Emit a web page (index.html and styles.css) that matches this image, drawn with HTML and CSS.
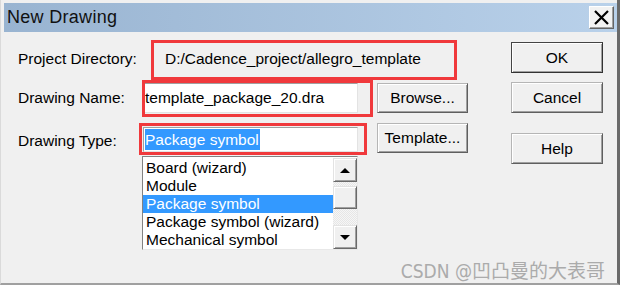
FILE: index.html
```html
<!DOCTYPE html>
<html>
<head>
  <meta charset="UTF-8">
  <title>New Drawing</title>
  <link rel="stylesheet" href="styles.css">
</head>
<body>
<div class="window">
  <div class="titlebar">
    <span class="title">New Drawing</span>
    <button class="close">
      <svg width="17" height="15" viewBox="0 0 17 15"><path d="M2 1 L15 14 M15 1 L2 14" stroke="#000" stroke-width="2.2" fill="none"/></svg>
    </button>
  </div>
  <div class="body">
    <div class="form">
      <div class="row row-dir">
        <label>Project Directory:</label>
        <span class="dir">D:/Cadence_project/allegro_template</span>
      </div>
      <div class="row row-name">
        <label>Drawing Name:</label>
        <div class="field">template_package_20.dra</div>
        <button class="btn">Browse...</button>
      </div>
      <div class="row row-type">
        <label>Drawing Type:</label>
        <div class="field"><span class="sel">Package symbol</span></div>
        <button class="btn">Template...</button>
      </div>
      <div class="list">
        <div class="items">
          <div class="item">Board (wizard)</div>
          <div class="item">Module</div>
          <div class="item active">Package symbol</div>
          <div class="item">Package symbol (wizard)</div>
          <div class="item">Mechanical symbol</div>
        </div>
        <div class="scrollbar">
          <div class="sb-btn"><span class="arrow up"></span></div>
          <div class="track short"></div>
          <div class="sb-btn thumb"></div>
          <div class="track"></div>
          <div class="sb-btn"><span class="arrow down"></span></div>
        </div>
      </div>
    </div>
    <div class="actions">
      <button class="btn default">OK</button>
      <button class="btn">Cancel</button>
      <button class="btn help">Help</button>
    </div>
  </div>

  <!-- annotation boxes drawn over the dialog -->
  <div class="mark mark-dir"></div>
  <div class="mark mark-name"></div>
  <div class="mark mark-type"></div>
  <div class="watermark">CSDN @凹凸曼的大表哥</div>
</div>
</body>
</html>
```

FILE: styles.css
```css
body {
  margin: 0;
  background: #fff;
  font-family: "Liberation Sans", Arial, sans-serif;
  font-size: 15.5px;
  color: #000;
}

.window {
  position: relative;
  box-sizing: border-box;
  width: 620px;
  height: 285px;
  padding: 3px 0 0 3px;
  background: #f0f0f0;
  border-left: 1px solid #dadada;
  border-right: 3px solid #6a6a6a;
  border-bottom: 2px solid #a0a0a0;
  display: flex;
  flex-direction: column;
}

.titlebar {
  height: 29px;
  background: linear-gradient(to right, #99b4d1, #b9d1ea);
  display: flex;
  align-items: center;
  justify-content: space-between;
  padding: 0 3px 0 3px;
}

.title {
  font-size: 18px;
  letter-spacing: 0.3px;
  color: #111;
}

.close {
  width: 25px;
  height: 23px;
  padding: 0;
  background: #f2f2f2;
  border: 1px solid;
  border-color: #fff #646464 #646464 #fff;
  box-shadow: inset -1px -1px #a0a0a0;
  display: flex;
  align-items: center;
  justify-content: center;
}

.body {
  flex: 1;
  display: flex;
  padding-left: 14px;
}

.row {
  display: flex;
  align-items: flex-start;
}

.row label {
  width: 125px;
  flex: none;
}

.row-dir {
  margin-top: 8px;
  height: 38px;
  align-items: center;
}

.dir {
  padding-left: 22px;
}

.row-name {
  margin-top: 5px;
  height: 30px;
}

.row-name label {
  line-height: 30px;
}

.row-type {
  margin-top: 10px;
  height: 30px;
}

.row-type label {
  line-height: 30px;
  padding-top: 3px;
}

.field {
  box-sizing: border-box;
  width: 215px;
  height: 30px;
  background: #fff;
  border: 1px solid;
  border-color: #a0a0a0 #e3e3e3 #e3e3e3 #a0a0a0;
  padding: 0 1px;
  line-height: 28px;
  white-space: nowrap;
  overflow: hidden;
}

.row-type .field {
  height: 25px;
  margin-top: 4px;
  line-height: 23px;
}

.sel {
  background: #3399ff;
  color: #fff;
  padding: 2px 1px 2px 0;
}

.btn {
  box-sizing: border-box;
  width: 91px;
  height: 31px;
  margin-left: 19px;
  padding: 0;
  font-family: "Liberation Sans", Arial, sans-serif;
  font-size: 15.5px;
  color: #000;
  background: #f0f0f0;
  border: 1px solid;
  border-color: #b5b5b5 #5f5f5f #5f5f5f #b5b5b5;
  box-shadow: inset 1px 1px #fff, inset -1px -1px #a0a0a0;
}

.row .btn {
  height: 30px;
}

.list {
  box-sizing: border-box;
  margin: 3px 0 0 124px;
  width: 216px;
  height: 94px;
  background: #fff;
  border: 1px solid;
  border-color: #828282 #e8e8e8 #e8e8e8 #828282;
  display: flex;
}

.items {
  flex: 1;
  padding-top: 2px;
}

.item {
  height: 18px;
  line-height: 18px;
  padding-left: 3px;
  white-space: nowrap;
}

.item.active {
  background: #3399ff;
  color: #fff;
}

.scrollbar {
  width: 24px;
  padding-top: 1px;
  display: flex;
  flex-direction: column;
}

.sb-btn {
  box-sizing: border-box;
  height: 24px;
  background: #f0f0f0;
  border: 1px solid;
  border-color: #e3e3e3 #6a6a6a #6a6a6a #e3e3e3;
  box-shadow: inset 1px 1px #fff, inset -1px -1px #a0a0a0;
  display: flex;
  align-items: center;
  justify-content: center;
}

.thumb {
  height: 23px;
}

.track {
  height: 16px;
  background: repeating-conic-gradient(#f6f6f6 0 25%, #e6e6e6 0 50%) 0 0 / 2px 2px;
}

.track.short {
  height: 4px;
}

.arrow {
  width: 0;
  height: 0;
  border-left: 5px solid transparent;
  border-right: 5px solid transparent;
}

.arrow.up {
  border-bottom: 5px solid #000;
}

.arrow.down {
  border-top: 5px solid #000;
}

.actions {
  margin-left: auto;
  margin-right: 14px;
  display: flex;
  flex-direction: column;
}

.actions .btn {
  margin-left: 0;
  width: 92px;
  margin-top: 9px;
}

.actions .default {
  margin-top: 10px;
  border-color: #444 #333 #333 #444;
}

.actions .help {
  margin-top: 20px;
}

.mark {
  position: absolute;
  border: 3px solid #f0393c;
  box-sizing: border-box;
}

.mark-dir {
  left: 150px;
  top: 40px;
  width: 306px;
  height: 40px;
}

.mark-name {
  left: 141px;
  top: 80px;
  width: 231px;
  height: 37px;
}

.mark-type {
  left: 138px;
  top: 123px;
  width: 228px;
  height: 32px;
}

.watermark {
  position: absolute;
  right: 12px;
  top: 256px;
  font-family: "Liberation Sans Narrow", "DejaVu Sans Condensed", "Noto Sans CJK SC", sans-serif;
  font-size: 19px;
  color: #ababab;
  white-space: nowrap;
}
```
